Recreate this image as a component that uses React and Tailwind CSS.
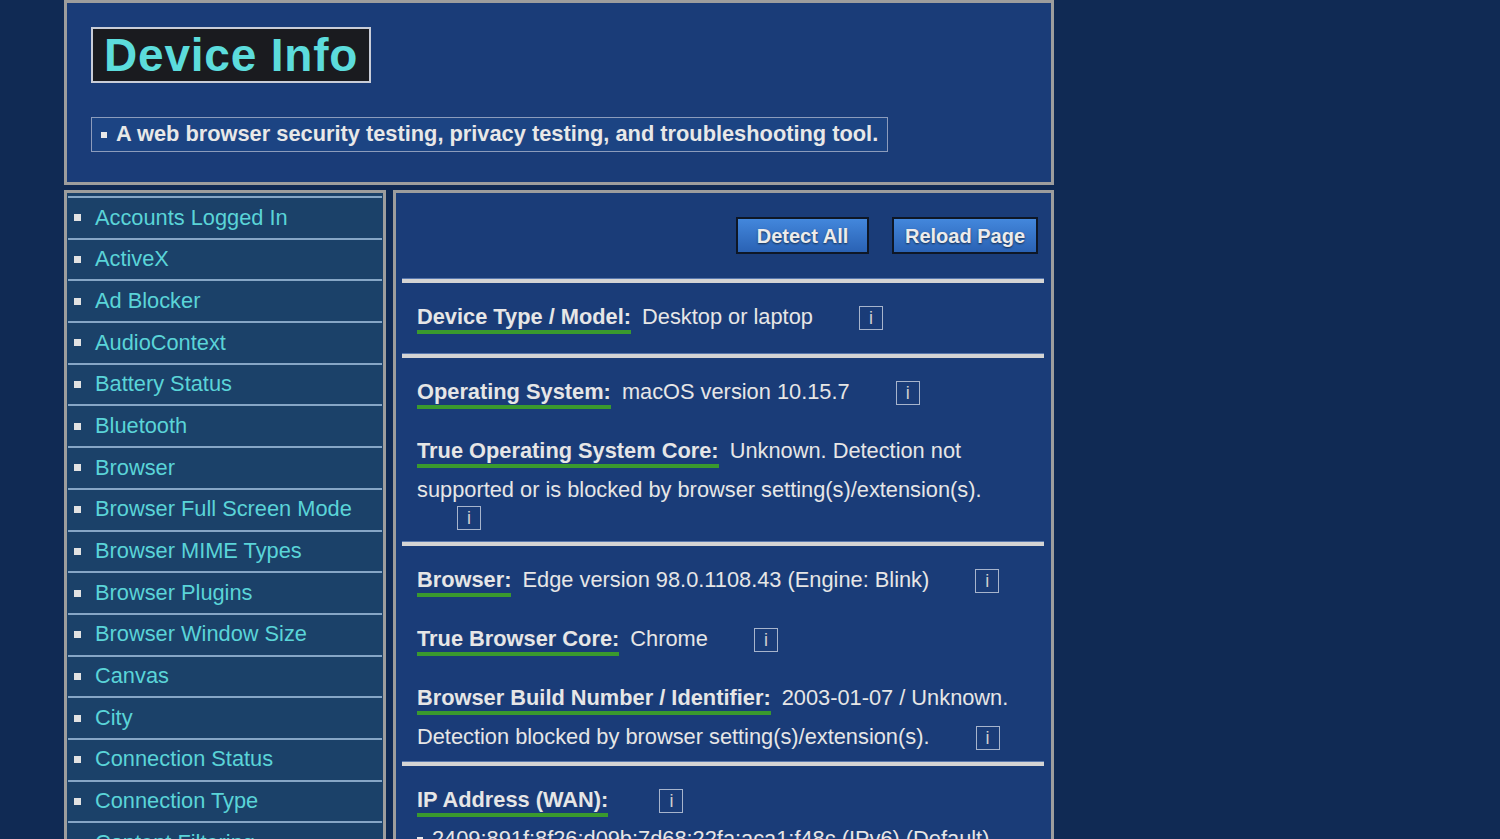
import React from "react";

const menu = [
  "Accounts Logged In",
  "ActiveX",
  "Ad Blocker",
  "AudioContext",
  "Battery Status",
  "Bluetooth",
  "Browser",
  "Browser Full Screen Mode",
  "Browser MIME Types",
  "Browser Plugins",
  "Browser Window Size",
  "Canvas",
  "City",
  "Connection Status",
  "Connection Type",
  "Content Filtering",
  "Cookies",
  "CPU Cores",
];

function Info() {
  return (
    <span className="inline-block ml-[40px] w-[24px] h-[24px] border border-[#a7b4cc] text-center text-[18px] leading-[22px] text-[#cfcfcf] font-normal align-baseline">
      i
    </span>
  );
}

function Label({ children }) {
  return (
    <span className="inline-block leading-[normal] font-bold border-b-4 border-[#3a9a2e] mb-[8px] mr-[5px]">
      {children}
    </span>
  );
}

function Row({ label, children }) {
  return (
    <div className="leading-[27px]">
      <Label>{label}</Label> {children} <Info />
    </div>
  );
}

function Rule() {
  return <div className="ml-[6px] mr-[7px] h-[5px] bg-[#d4d4d4] border-t border-[#5877ad]" />;
}

function Section({ children }) {
  return <div className="px-[21px] pt-[20px] pb-[11px] flex flex-col gap-[20px]">{children}</div>;
}

export default function App() {
  return (
    <div className="h-screen overflow-hidden bg-[#102a54] font-['Liberation_Sans',Arial,sans-serif]">
      <div className="w-[990px] ml-[64px]">
        {/* Header */}
        <div className="border-[3px] border-[#9d9d9d] bg-[#1a3c78] pl-[24px] pt-[24px] pb-[30px]">
          <div className="w-fit border-2 border-[#c9cdd8] bg-[#1a1b1f] px-[11px] text-[46px] leading-[52px] font-bold tracking-[0.8px] text-[#5cdcdc]">
            Device Info
          </div>
          <div className="mt-[34px] w-fit flex items-center border border-[#8c9cbc] bg-[#1c4483] pl-[9px] pr-[9px] h-[35px] text-[21.8px] font-bold text-[#e8e8e8]">
            <span className="w-[6px] h-[6px] bg-[#e8e8e8] mr-[9px]" />
            A web browser security testing, privacy testing, and troubleshooting tool.
          </div>
        </div>

        <div className="flex gap-[7px] mt-[5px]">
          {/* Sidebar */}
          <div className="w-[322px] shrink-0 border-[3px] border-[#9d9d9d] bg-[#1b4169] pt-[3px] px-[1px]">
            {menu.map((item) => (
              <div
                key={item}
                className="flex items-center h-[41.7px] border-t-2 border-[#86a6c6] text-[21.8px] text-[#5ad4d8]"
              >
                <span className="w-[7px] h-[7px] bg-[#e2e2e2] ml-[6px] mr-[14px]" />
                {item}
              </div>
            ))}
          </div>

          {/* Main */}
          <div className="flex-1 border-[3px] border-[#9d9d9d] bg-[#1a3c78] text-[21.8px] text-[#e6e6e6]">
            <div className="flex justify-end gap-[23px] pt-[24px] pr-[13px] pb-[24px]">
              <button className="w-[133px] h-[37px] border-2 border-[#0e1726] bg-linear-to-b from-[#4387dc] to-[#2a62b4] text-[20px] font-bold text-[#ececec] [text-shadow:0_1px_2px_rgba(0,0,0,0.6)]">
                Detect All
              </button>
              <button className="w-[146px] h-[37px] border-2 border-[#0e1726] bg-linear-to-b from-[#4387dc] to-[#2a62b4] text-[20px] font-bold text-[#ececec] [text-shadow:0_1px_2px_rgba(0,0,0,0.6)]">
                Reload Page
              </button>
            </div>

            <Rule />
            <Section>
              <Row label="Device Type / Model:">Desktop or laptop</Row>
            </Section>

            <Rule />
            <Section>
              <Row label="Operating System:">macOS version 10.15.7</Row>
              <Row label="True Operating System Core:">
                Unknown. Detection not supported or is blocked by browser setting(s)/extension(s).
              </Row>
            </Section>

            <Rule />
            <Section>
              <Row label="Browser:">Edge version 98.0.1108.43 (Engine: Blink)</Row>
              <Row label="True Browser Core:">Chrome</Row>
              <Row label="Browser Build Number / Identifier:">
                2003-01-07 / Unknown. Detection blocked by browser setting(s)/extension(s).
              </Row>
            </Section>

            <Rule />
            <Section>
              <div className="leading-[27px]">
                <Label>IP Address (WAN):</Label> <Info />
                <div>
                  <span className="inline-block w-[6px] h-[6px] bg-[#e6e6e6] mr-[9px] align-middle" />
                  2409:891f:8f26:d09b:7d68:22fa:aca1:f48c (IPv6) (Default)
                </div>
              </div>
            </Section>
          </div>
        </div>
      </div>
    </div>
  );
}
